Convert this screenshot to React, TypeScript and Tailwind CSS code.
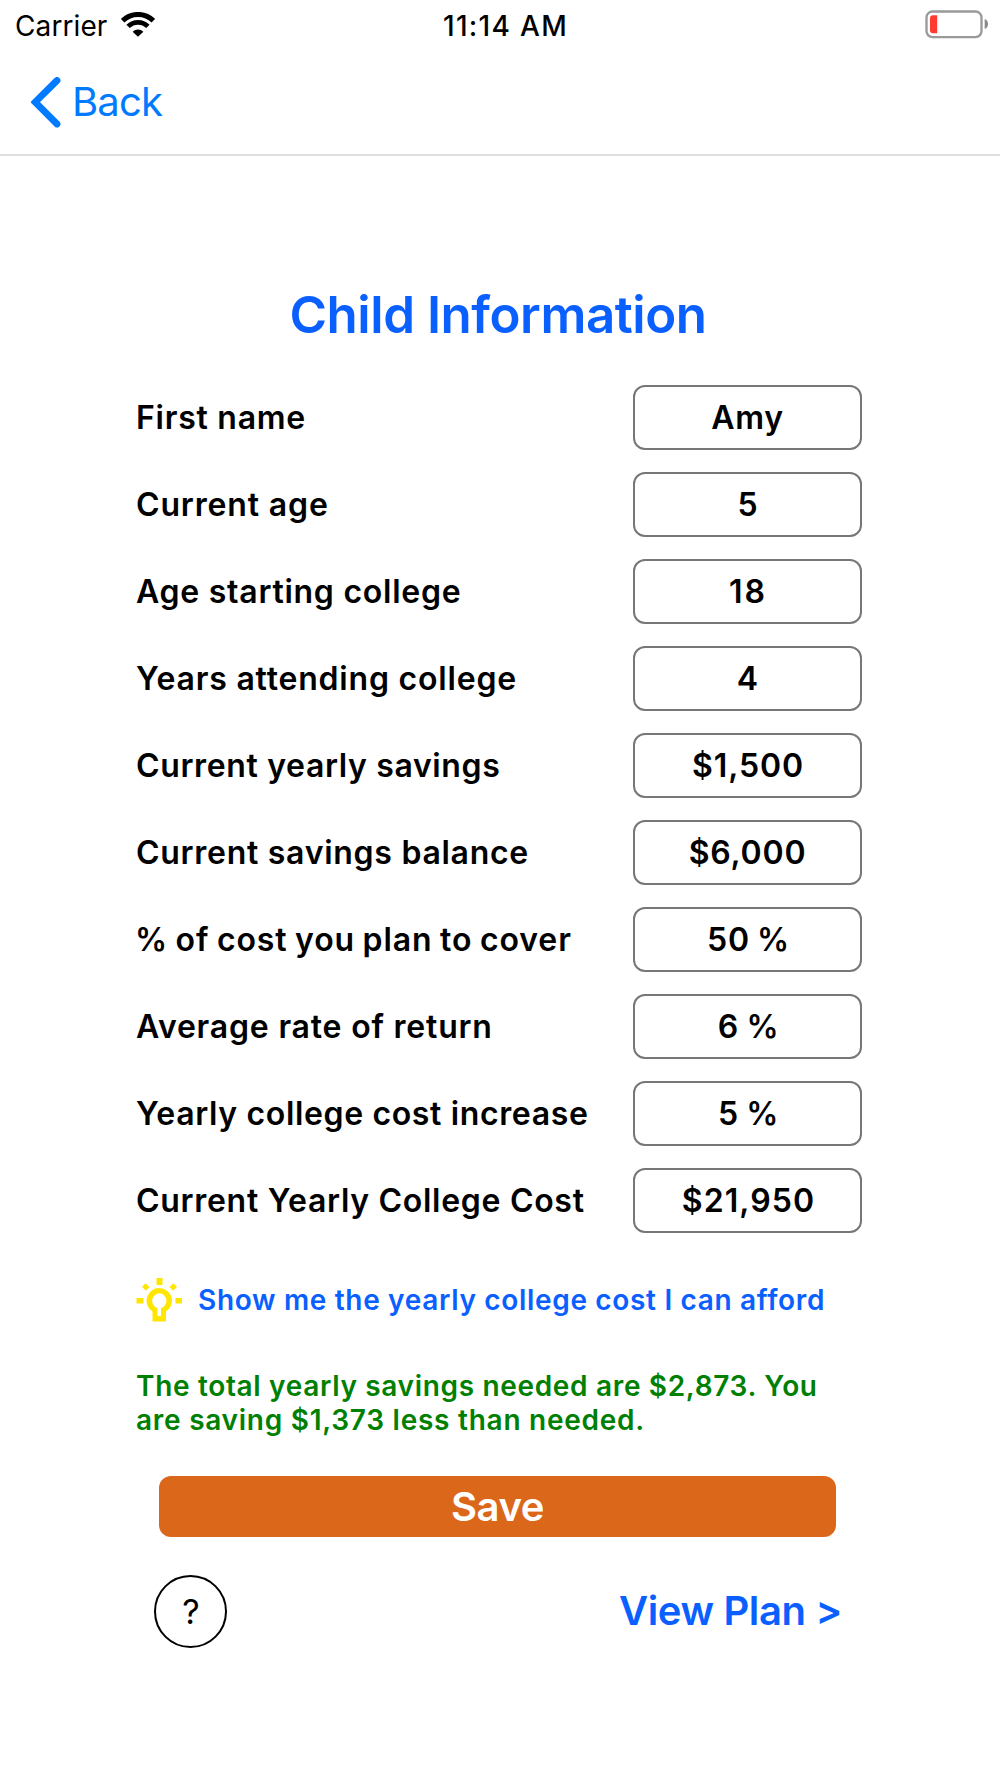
const rows: { label: string; value: string; labelClass: string; valueClass: string }[] = [
  { label: 'First name', value: 'Amy', labelClass: 'tracking-[0.75px]', valueClass: 'tracking-[0.7px]' },
  { label: 'Current age', value: '5', labelClass: 'tracking-[0.85px]', valueClass: '' },
  { label: 'Age starting college', value: '18', labelClass: 'tracking-[0.74px]', valueClass: 'tracking-[2px] pl-px' },
  { label: 'Years attending college', value: '4', labelClass: 'tracking-[0.8px]', valueClass: '' },
  { label: 'Current yearly savings', value: '$1,500', labelClass: 'tracking-[0.64px]', valueClass: 'tracking-[0.9px] pl-px' },
  { label: 'Current savings balance', value: '$6,000', labelClass: 'tracking-[0.72px]', valueClass: 'tracking-[0.8px]' },
  { label: '% of cost you plan to cover', value: '50 %', labelClass: 'ml-[-1px] tracking-[0.9px] [word-spacing:-1.4px]', valueClass: 'tracking-[0.9px] [word-spacing:-2px] pl-[2px]' },
  { label: 'Average rate of return', value: '6 %', labelClass: 'tracking-[0.8px]', valueClass: 'tracking-[0.6px] [word-spacing:-1px] pl-[2px]' },
  { label: 'Yearly college cost increase', value: '5 %', labelClass: 'tracking-[0.64px]', valueClass: 'tracking-[0.6px] [word-spacing:-1px] pl-[2px]' },
  { label: 'Current Yearly College Cost', value: '$21,950', labelClass: 'tracking-[0.7px]', valueClass: 'tracking-[1.1px] pl-[2px]' },
];

function Wifi() {
  return (
    <svg className="-mt-[3px]" width="34" height="25" viewBox="0 0 34 25" fill="none" stroke="#000">
      <path d="M1.6 8.7a22 22 0 0 1 30.8 0" strokeWidth="5" />
      <path d="M7.1 14.4a14.2 14.2 0 0 1 19.8 0" strokeWidth="4.8" />
      <path d="M17 24.800l-5.400-5.100a7.800 7.800 0 0 1 10.800 0z" fill="#000" stroke="none" />
    </svg>
  );
}

function Battery() {
  return (
    <svg className="-mr-px -mt-[2px]" width="64" height="29" viewBox="0 0 64 29">
      <rect x="1.500" y="1.500" width="55" height="25.600" rx="6" fill="none" stroke="#999" strokeWidth="2.300" />
      <path d="M12.200 5.200v18H8a3 3 0 0 1-3-3V8.200a3 3 0 0 1 3-3z" fill="#ff3b30" />
      <path d="M59.700 9c2 .6 3.300 2.600 3.300 5s-1.300 4.400-3.300 5z" fill="#888" />
    </svg>
  );
}

function Bulb() {
  return (
    <svg width="46" height="44" viewBox="0 0 46 44" fill="#ffe600">
      <path d="M20.500 0h6v7h-6zM.5 20h7v5.500h-7zM39.500 20h6.500v5.500h-6.500z" />
      <path d="M6 8.800l3.600-3.600 3.900 3.900-3.600 3.600zM41 8.800l-3.600-3.600-3.900 3.900 3.600 3.600z" />
      <path fillRule="evenodd" d="M23.500 10a12.700 12.700 0 0 0-7 23.500V43.500h13.500V33.500a12.700 12.700 0 0 0-6.500-23.500zm0 5.300a7.500 7.500 0 0 0-2 14.700V38h3.500v-8A7.500 7.500 0 0 0 23.500 15.300z" />
    </svg>
  );
}

export default function App() {
  return (
    <div className="flex h-[1778px] w-[1000px] flex-col bg-white font-['Inter',sans-serif] text-black">
      <header className="h-[156px] border-b-2 border-[#dfdfdf]">
        <div className="grid h-[51px] grid-cols-3 items-center pl-[15px] pr-[12px]">
          <div className="flex items-center gap-[14px] text-[28px] tracking-[0.1px]">
            Carrier
            <Wifi />
          </div>
          <div className="pl-[8px] text-center text-[28px] font-medium tracking-[1.3px]">11:14 AM</div>
          <div className="flex justify-end">
            <Battery />
          </div>
        </div>
        <div className="flex h-[102px] items-center gap-[11px] pl-[31px] text-[40px] tracking-[-0.8px] text-[#007aff]">
          <svg width="30" height="51" viewBox="0 0 30 51" fill="none" stroke="currentColor" strokeWidth="6.8" strokeLinecap="round" strokeLinejoin="miter">
            <path d="M26 3.500L4.200 25.200l21.800 21.800" />
          </svg>
          <span className="-mt-px">Back</span>
        </div>
      </header>
      <main className="flex flex-col">
        <h1 className="mt-[121px] pr-[4px] text-center text-[51px] font-semibold leading-[76px] tracking-[-0.45px] text-[#0a60ff]">
          Child Information
        </h1>
        <div className="mt-[32px] flex flex-col gap-[22px] pl-[136px] pr-[138px]">
          {rows.map((r) => (
            <div key={r.label} className="flex h-[65px] items-center justify-between text-[32px] font-semibold">
              <span className={r.labelClass}>{r.label}</span>
              <span className="flex h-[65px] w-[229px] items-center justify-center rounded-[12px] border-2 border-[#777]">
                <span className={r.valueClass}>{r.value}</span>
              </span>
            </div>
          ))}
        </div>
        <div className="mt-[42px] flex h-[50px] items-center gap-[16px] pl-[136px] text-[28px] font-semibold text-[#0a60ff]">
          <Bulb />
          <span className="whitespace-nowrap tracking-[0.67px]">Show me the yearly college cost I can afford</span>
        </div>
        <p className="mt-[44px] pl-[136px] text-[28px] font-semibold leading-[34px] tracking-[0.67px] text-[#008000]">
          The total yearly savings needed are $2,873. You
          <br />
          <span className="tracking-[0.74px]">are saving $1,373 less than needed.</span>
        </p>
        <button className="ml-[159px] mt-[39px] h-[61px] w-[677px] rounded-[12px] bg-[#db671a] text-[40px] font-semibold leading-[61px] tracking-[-0.4px] text-white">
          Save
        </button>
        <div className="mt-[38px] flex h-[73px] items-center justify-between pl-[154px] pr-[158px]">
          <button className="h-[73px] w-[73px] rounded-full border-2 border-black pl-px text-[34px]">?</button>
          <a className="-mt-[2px] text-[40px] font-semibold tracking-[-0.35px] text-[#0a60ff]">View Plan &gt;</a>
        </div>
      </main>
    </div>
  );
}
